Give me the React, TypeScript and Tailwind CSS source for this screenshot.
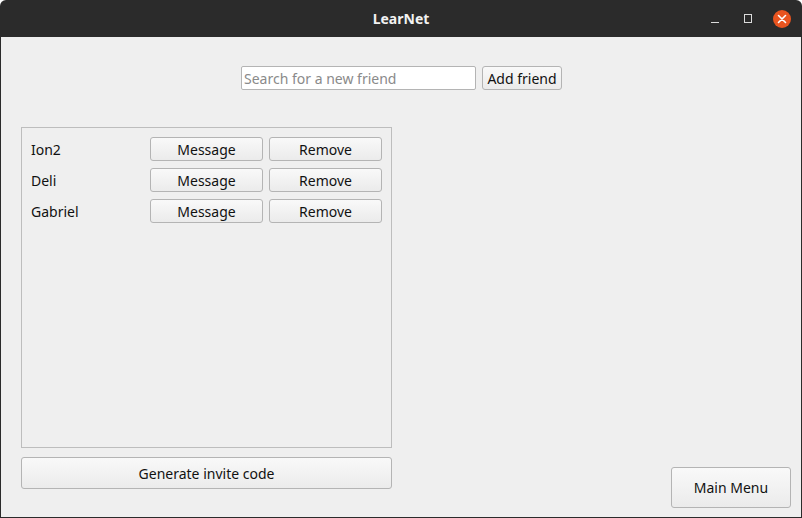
import React from 'react';

const friends = ['Ion2', 'Deli', 'Gabriel'];

function QtButton({ label, className = '' }: { label: string; className?: string }) {
  return (
    <button
      className={`flex items-center justify-center rounded-[3px] border border-[#b4b4b4] bg-gradient-to-b from-[#f9f9f9] to-[#ebebeb] text-[14px] text-[#111] ${className}`}
    >
      {label}
    </button>
  );
}

export default function App() {
  return (
    <div
      className="flex h-[518px] w-[802px] flex-col overflow-hidden rounded-t-[6px] bg-[#2b2b2b]"
      style={{ fontFamily: '"Noto Sans", "Open Sans", sans-serif' }}
    >
      {/* title bar */}
      <div className="relative flex h-[37px] shrink-0 items-center justify-center">
        <span className="text-[14px] font-bold text-[#f2f2f2]">LearNet</span>
        <div className="absolute right-[11px] top-0 flex h-full items-center">
          <span className="mr-[25px] mt-[8px] block h-[1px] w-[8px] bg-[#dcdcdc]" />
          <span className="mr-[21px] block h-[9px] w-[8px] border border-[#dcdcdc]" />
          <span className="flex h-[18px] w-[18px] items-center justify-center rounded-full bg-[#e9541f]">
            <svg width="10" height="10" viewBox="0 0 10 10">
              <path d="M1.5 1.5 L8.5 8.5 M8.5 1.5 L1.5 8.5" stroke="#fff" strokeWidth="1.6" strokeLinecap="round" />
            </svg>
          </span>
        </div>
      </div>

      {/* body */}
      <div className="mx-[1px] mb-[1px] flex flex-1 flex-col bg-[#efefef]">
        <div className="mt-[29px] flex justify-center gap-[6px] pl-[1px]">
          <input
            placeholder="Search for a new friend"
            className="h-[24px] w-[235px] rounded-[2px] border border-[#b4b4b4] bg-white px-[2px] text-[14px] text-[#111] outline-none placeholder:text-[#8a8a8a]"
          />
          <QtButton label="Add friend" className="h-[24px] w-[80px]" />
        </div>

        <div className="mt-[37px] flex flex-1 items-end justify-between pb-[9px] pl-[20px] pr-[10px]">
          <div className="flex flex-col self-stretch pb-[19px]">
            <div className="flex h-[321px] w-[371px] flex-col gap-[7px] border border-[#bdbdbd] pl-[9px] pt-[9px]">
              {friends.map((f) => (
                <div key={f} className="flex h-[24px] items-center">
                  <span className="w-[119px] text-[14px] text-[#111]">{f}</span>
                  <QtButton label="Message" className="h-[24px] w-[113px]" />
                  <QtButton label="Remove" className="ml-[6px] h-[24px] w-[113px]" />
                </div>
              ))}
            </div>
            <QtButton label="Generate invite code" className="mt-[9px] h-[32px] w-[371px]" />
          </div>
          <QtButton label="Main Menu" className="h-[41px] w-[120px]" />
        </div>
      </div>
    </div>
  );
}
